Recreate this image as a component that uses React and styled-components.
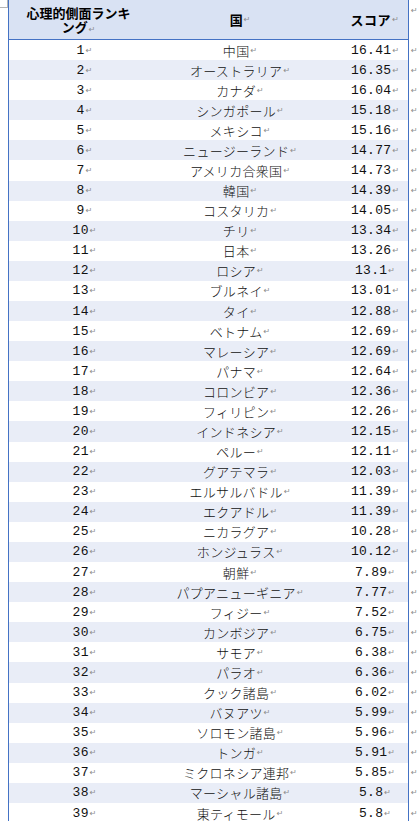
import React from 'react'
import styled, { createGlobalStyle } from 'styled-components'

const rows = [
  [1, '中国', '16.41'],
  [2, 'オーストラリア', '16.35'],
  [3, 'カナダ', '16.04'],
  [4, 'シンガポール', '15.18'],
  [5, 'メキシコ', '15.16'],
  [6, 'ニュージーランド', '14.77'],
  [7, 'アメリカ合衆国', '14.73'],
  [8, '韓国', '14.39'],
  [9, 'コスタリカ', '14.05'],
  [10, 'チリ', '13.34'],
  [11, '日本', '13.26'],
  [12, 'ロシア', '13.1'],
  [13, 'ブルネイ', '13.01'],
  [14, 'タイ', '12.88'],
  [15, 'ベトナム', '12.69'],
  [16, 'マレーシア', '12.69'],
  [17, 'パナマ', '12.64'],
  [18, 'コロンビア', '12.36'],
  [19, 'フィリピン', '12.26'],
  [20, 'インドネシア', '12.15'],
  [21, 'ペルー', '12.11'],
  [22, 'グアテマラ', '12.03'],
  [23, 'エルサルバドル', '11.39'],
  [24, 'エクアドル', '11.39'],
  [25, 'ニカラグア', '10.28'],
  [26, 'ホンジュラス', '10.12'],
  [27, '朝鮮', '7.89'],
  [28, 'パプアニューギニア', '7.77'],
  [29, 'フィジー', '7.52'],
  [30, 'カンボジア', '6.75'],
  [31, 'サモア', '6.38'],
  [32, 'パラオ', '6.36'],
  [33, 'クック諸島', '6.02'],
  [34, 'バヌアツ', '5.99'],
  [35, 'ソロモン諸島', '5.96'],
  [36, 'トンガ', '5.91'],
  [37, 'ミクロネシア連邦', '5.85'],
  [38, 'マーシャル諸島', '5.8'],
  [39, '東ティモール', '5.8'],
]

function App() {
  return (
    <>
      <GlobalStyle />
      <Page>
        <Margin>
          <CornerMark />
        </Margin>
        <Table>
          <Line>
            <HeadRow>
              <HeadCell>
                <HeadText>
                  <HeadLine>心理的側面ランキ</HeadLine>
                  <HeadLine>ング<Mark>↵</Mark></HeadLine>
                </HeadText>
              </HeadCell>
              <HeadCell>国<Mark>↵</Mark></HeadCell>
              <HeadCell shift={10}>スコア<Mark>↵</Mark></HeadCell>
            </HeadRow>
            <EndMark top>↵</EndMark>
          </Line>
          {rows.map(([rank, country, score]) => (
            <Line key={rank}>
              <Row alt={rank % 2 === 0}>
                <Cell shift={12}>{rank}<Mark>↵</Mark></Cell>
                <Cell>{country}<Mark>↵</Mark></Cell>
                <Cell shift={10}>{score}<Mark>↵</Mark></Cell>
              </Row>
              <EndMark>↵</EndMark>
            </Line>
          ))}
        </Table>
      </Page>
    </>
  )
}

export default App

// ----Global
const GlobalStyle = createGlobalStyle`
  body {
    margin: 0;
    background: #ffffff;
    overflow: hidden;
  }
`

//----Page layout
const Page = styled.div`
  display: flex;
  align-items: flex-start;
`

const Margin = styled.div`
  width: 8px;
  flex-shrink: 0;
`

const CornerMark = styled.div`
  width: 7px;
  height: 7px;
  border-right: 1px solid #b4b4b4;
  border-bottom: 1px solid #b4b4b4;
`

const Table = styled.div`
  display: flex;
  flex-direction: column;
`

const Line = styled.div`
  display: flex;
  align-items: stretch;
`

//----Rows
const HeadRow = styled.div`
  display: grid;
  grid-template-columns: 139px 184px 76px;
  height: 39px;
  background-color: #d9e2f3;
  border-left: 1px solid #4472c4;
  border-right: 1px solid #4472c4;
  border-bottom: 1px solid #4472c4;
`

const Row = styled.div`
  display: grid;
  grid-template-columns: 139px 184px 76px;
  height: 20.09px;
  background-color: ${(p) => (p.alt ? '#e9edf7' : '#ffffff')};
  border-left: 1px solid #4472c4;
  border-right: 1px solid #4472c4;
`

//----Cells
const HeadCell = styled.div`
  display: flex;
  align-items: center;
  justify-content: center;
  padding-left: ${(p) => p.shift || 0}px;
  font-family: 'Noto Sans CJK JP', sans-serif;
  font-weight: 700;
  font-size: 13px;
  color: #000000;
  font-feature-settings: ${(p) => (p.shift ? '"palt"' : 'normal')};
  letter-spacing: ${(p) => (p.shift ? '1px' : '0')};
`

const HeadText = styled.div`
  display: flex;
  flex-direction: column;
  align-items: center;
  gap: 0;
`

const HeadLine = styled.div`
  height: 14px;
  line-height: 14px;
  white-space: nowrap;
`

const Cell = styled.div`
  display: flex;
  align-items: center;
  justify-content: center;
  padding-left: ${(p) => p.shift || 0}px;
  font-family: 'Liberation Mono', 'Noto Sans CJK JP', monospace;
  font-size: 13px;
  font-weight: 300;
  letter-spacing: 0.3px;
  color: #111111;
  white-space: nowrap;
`

//----Paragraph marks
const Mark = styled.span`
  font-family: 'DejaVu Sans', sans-serif;
  font-weight: 400;
  font-size: 8px;
  color: #8c8c8c;
  margin-left: 1px;
  letter-spacing: 0;
`

const EndMark = styled.div`
  width: 8px;
  padding-left: 2px;
  display: flex;
  align-items: ${(p) => (p.top ? 'flex-start' : 'center')};
  padding-top: ${(p) => (p.top ? '6px' : '0')};
  font-family: 'DejaVu Sans', sans-serif;
  font-size: 8px;
  color: #8c8c8c;
`
